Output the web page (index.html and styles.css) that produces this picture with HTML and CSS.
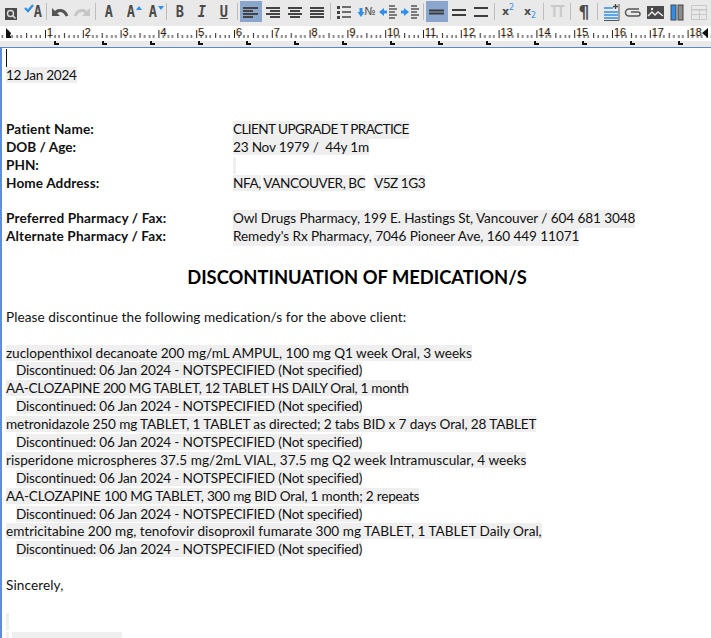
FILE: index.html
```html
<!DOCTYPE html>
<html lang="en">
<head>
<meta charset="utf-8">
<title>Discontinuation of medication</title>
<link rel="stylesheet" href="styles.css">
</head>
<body>
<div class="toolbar">
  <span class="btn"><svg width="22" height="22" viewBox="0 0 22 22"><rect x="5" y="7" width="12" height="12" fill="#4a4a4a"/><circle cx="10.500" cy="12.500" r="3" fill="none" stroke="#ddd" stroke-width="1.400"/><path d="M12.500 14.500l3 3" stroke="#ddd" stroke-width="1.600"/></svg></span>
  <span class="btn"><svg width="22" height="22" viewBox="0 0 22 22"><path d="M3 7l3 3 5-6" fill="none" stroke="#2f8fe8" stroke-width="2.200"/></svg><b class="glyph over">A</b></span>
  <i class="sep"></i>
  <span class="btn"><svg width="22" height="22" viewBox="0 0 22 22"><path d="M6 13c2-5 9-5 12 2" fill="none" stroke="#555" stroke-width="3"/><path d="M3 7v8h8z" fill="#555"/></svg></span>
  <span class="btn"><svg width="22" height="22" viewBox="0 0 22 22"><path d="M16 13c-2-5-9-5-12 2" fill="none" stroke="#c6c6c6" stroke-width="3"/><path d="M19 7v8h-8z" fill="#c6c6c6"/></svg></span>
  <i class="sep"></i>
  <span class="btn"><b class="glyph">A</b></span>
  <span class="btn"><b class="glyph">A</b><svg class="mark" width="6" height="4" viewBox="0 0 6 4"><path d="M0 4l3-4 3 4z" fill="#2f8fe8"/></svg></span>
  <span class="btn"><b class="glyph">A</b><svg class="mark" width="6" height="4" viewBox="0 0 6 4"><path d="M0 0l3 4 3-4z" fill="#2f8fe8"/></svg></span>
  <i class="sep"></i>
  <span class="btn"><b class="glyph">B</b></span>
  <span class="btn"><b class="glyph slant">I</b></span>
  <span class="btn"><b class="glyph under">U</b></span>
  <i class="sep"></i>
  <span class="btn on"><svg width="22" height="22" viewBox="0 0 22 22"><path d="M3 7h15M3 10h10M3 13h15M3 16h10" stroke="#444" stroke-width="2"/></svg></span>
  <span class="btn"><svg width="22" height="22" viewBox="0 0 22 22"><path d="M4 7h14M8 10h10M4 13h14M8 16h10" stroke="#444" stroke-width="2"/></svg></span>
  <span class="btn"><svg width="22" height="22" viewBox="0 0 22 22"><path d="M4 7h14M6 10h10M4 13h14M6 16h10" stroke="#444" stroke-width="2"/></svg></span>
  <span class="btn"><svg width="22" height="22" viewBox="0 0 22 22"><path d="M4 7h14M4 10h14M4 13h14M4 16h14" stroke="#444" stroke-width="2"/></svg></span>
  <i class="sep"></i>
  <span class="btn"><svg width="22" height="22" viewBox="0 0 22 22"><path d="M4 5h3v3H4zM4 10h3v3H4zM4 15h3v3H4z" fill="#444"/><path d="M9 6h9M9 11h9M9 16h9" stroke="#444" stroke-width="1.400"/></svg></span>
  <span class="btn"><svg width="22" height="22" viewBox="0 0 22 22"><path d="M6 7v6" stroke="#2f8fe8" stroke-width="3"/><path d="M2.500 11h7L6 16z" fill="#2f8fe8"/></svg><span class="no">№</span></span>
  <span class="btn"><svg width="22" height="22" viewBox="0 0 22 22"><path d="M2 11l5-4v8z" fill="#2f8fe8"/><path d="M6 11h4" stroke="#2f8fe8" stroke-width="3"/><path d="M12 5h6M12 8h8M12 11h6M12 14h8M12 17h6" stroke="#555" stroke-width="1.300"/></svg></span>
  <span class="btn"><svg width="22" height="22" viewBox="0 0 22 22"><path d="M10 11l-5-4v8z" fill="#2f8fe8"/><path d="M2 11h4" stroke="#2f8fe8" stroke-width="3"/><path d="M12 5h6M12 8h8M12 11h6M12 14h8M12 17h6" stroke="#555" stroke-width="1.300"/></svg></span>
  <i class="sep"></i>
  <span class="btn on"><svg width="22" height="22" viewBox="0 0 22 22"><path d="M3 9.500h15M3 12.500h15" stroke="#3c3c3c" stroke-width="2"/></svg></span>
  <span class="btn"><svg width="22" height="22" viewBox="0 0 22 22"><path d="M4 9h14M4 14h14" stroke="#3c3c3c" stroke-width="2"/></svg></span>
  <span class="btn"><svg width="22" height="22" viewBox="0 0 22 22"><path d="M4 7h14M4 15h14" stroke="#3c3c3c" stroke-width="2"/></svg></span>
  <i class="sep"></i>
  <span class="btn"><b class="script">x<sup>2</sup></b></span>
  <span class="btn"><b class="script">x<sub>2</sub></b></span>
  <i class="sep"></i>
  <span class="btn"><b class="glyph off">TT</b></span>
  <i class="sep"></i>
  <span class="btn"><b class="pilcrow">¶</b></span>
  <i class="sep"></i>
  <span class="btn"><svg width="22" height="22" viewBox="0 0 22 22"><path d="M4 7h9M4 11h14M4 14h14M4 17h14" stroke="#2f8fe8" stroke-width="1.300"/><path d="M4 19.500h15V3" fill="none" stroke="#555"/><path d="M13 5.500h5M15.500 3v5" stroke="#444" stroke-width="1.300"/></svg></span>
  <span class="btn"><svg width="22" height="22" viewBox="0 0 22 22"><path d="M17 8H7a3 3 0 0 0 0 7h9a2 2 0 0 0 0-4H9" fill="none" stroke="#555" stroke-width="1.500"/></svg></span>
  <span class="btn"><svg width="22" height="22" viewBox="0 0 22 22"><rect x="3" y="5" width="17" height="13" fill="#4a4a4a"/><path d="M4 15l4-4 3 3 3-3 5 4" fill="none" stroke="#eee" stroke-width="1.400"/><circle cx="8" cy="8" r="1.200" fill="#eee"/></svg></span>
  <span class="btn"><svg width="22" height="22" viewBox="0 0 22 22"><rect x="5" y="4" width="5" height="15" fill="#2f8fe8" stroke="#444"/><rect x="12" y="4" width="5" height="15" fill="#8c8c8c" stroke="#444"/></svg></span>
  <span class="btn"><svg width="22" height="22" viewBox="0 0 22 22"><path d="M3.500 4.500h15v14h-15z" fill="none" stroke="#c8c8c8"/><path d="M3 8h16v1.500H3zM11 8h1v11h-1zM3 13h16v1H3z" fill="#c8c8c8"/></svg></span>
</div>
<div class="ruler">
  <svg class="ticks" width="711" height="15"><defs><pattern id="t" x="7.200" y="0" width="37.800" height="15" patternUnits="userSpaceOnUse"><path d="M.5 4v8M19.500 7v5M5 9v3M10 9v3M14 9v3M24 9v3M29 9v3M33 9v3" stroke="#222"/></pattern></defs><rect width="711" height="15" fill="url(#t)"/><path d="M6 2v10h5v-2h-1l1-3z" fill="#111"/><path d="M708 2v10l-6-5z" fill="#111"/></svg>
  <div class="nums"><span>1</span><span>2</span><span>3</span><span>4</span><span>5</span><span>6</span><span>7</span><span>8</span><span>9</span><span>10</span><span>11</span><span>12</span><span>13</span><span>14</span><span>15</span><span>16</span><span>17</span><span>18</span></div>
</div>
<div class="tabs"><i></i><i></i><i></i><i></i><i></i><i></i><i></i><i></i><i></i><i></i><i></i><i></i><i></i><i></i></div>
<main class="doc">
  <p class="caretline"><i class="caret"></i></p>
  <p><span class="hl digits">12 Jan 2024</span></p>
  <p>&nbsp;</p>
  <p>&nbsp;</p>
  <div class="row"><b class="wide1">Patient Name:</b><span class="hl caps">CLIENT UPGRADE T PRACTICE</span></div>
  <div class="row"><b>DOB / Age:</b><span><span class="hl digits2">23 Nov 1979 /&nbsp; 44y 1m</span></span></div>
  <div class="row"><b>PHN:</b><span class="hl stub"></span></div>
  <div class="row"><b class="wide3">Home Address:</b><span class="addr"><span class="hl">NFA,</span> <span class="hl">VANCOUVER, BC</span>&nbsp;&nbsp; <span class="hl">V5Z 1G3</span></span></div>
  <p class="gap">&nbsp;</p>
  <div class="row"><b class="wide3">Preferred Pharmacy / Fax:</b><span class="hl tight1">Owl Drugs Pharmacy, 199 E. Hastings St, Vancouver / 604 681 3048</span></div>
  <div class="row"><b class="wide3">Alternate Pharmacy / Fax:</b><span class="hl tight2">Remedy's Rx Pharmacy, 7046 Pioneer Ave, 160 449 11071</span></div>
  <p>&nbsp;</p>
  <h1>DISCONTINUATION OF MEDICATION/S</h1>
  <p>&nbsp;</p>
  <p class="wide4">Please discontinue the following medication/s for the above client:</p>
  <p>&nbsp;</p>
  <p><span class="hl tight3">zuclopenthixol decanoate 200 mg/mL AMPUL, 100 mg Q1 week Oral, 3 weeks</span></p>
  <p class="sub"><span class="hl">Discontinued: 06 Jan 2024 - NOTSPECIFIED (Not specified)</span></p>
  <p><span class="hl tight4">AA-CLOZAPINE 200 MG TABLET, 12 TABLET HS DAILY Oral, 1 month</span></p>
  <p class="sub"><span class="hl">Discontinued: 06 Jan 2024 - NOTSPECIFIED (Not specified)</span></p>
  <p><span class="hl tight5">metronidazole 250 mg TABLET, 1 TABLET as directed; 2 tabs BID x 7 days Oral, 28 TABLET</span></p>
  <p class="sub"><span class="hl">Discontinued: 06 Jan 2024 - NOTSPECIFIED (Not specified)</span></p>
  <p><span class="hl wide5">risperidone microspheres 37.5 mg/2mL VIAL, 37.5 mg Q2 week Intramuscular, 4 weeks</span></p>
  <p class="sub"><span class="hl">Discontinued: 06 Jan 2024 - NOTSPECIFIED (Not specified)</span></p>
  <p><span class="hl tight6">AA-CLOZAPINE 100 MG TABLET, 300 mg BID Oral, 1 month; 2 repeats</span></p>
  <p class="sub"><span class="hl">Discontinued: 06 Jan 2024 - NOTSPECIFIED (Not specified)</span></p>
  <p><span class="hl">emtricitabine 200 mg, tenofovir disoproxil fumarate 300 mg TABLET, 1 TABLET Daily Oral,</span></p>
  <p class="sub"><span class="hl">Discontinued: 06 Jan 2024 - NOTSPECIFIED (Not specified)</span></p>
  <p>&nbsp;</p>
  <p class="wide6">Sincerely,</p>
  <p>&nbsp;</p>
  <div class="blank"><span class="hl stub"></span></div>
  <div class="blank split"><span class="hl stub"></span><span class="hl sig"></span></div>
</main>
</body>
</html>
```
FILE: styles.css
```css
* { box-sizing: border-box; }
html, body { margin: 0; height: 100%; }
body {
  width: 711px;
  height: 638px;
  overflow: hidden;
  background: #fff;
  font-family: Lato, "Liberation Sans", sans-serif;
}
.toolbar {
  display: flex;
  height: 26px;
  padding-top: 1px;
  background: #e9e9e9;
}
.btn {
  position: relative;
  flex: 0 0 22px;
  width: 22px;
  height: 21px;
  display: flex;
  align-items: center;
  justify-content: center;
}
.btn svg { position: absolute; left: 0; top: 0; }
.btn svg.mark { left: 16px; top: 5px; }
.on { background: #8ba6cd; }
.sep {
  flex: 0 0 5px;
  position: relative;
}
.sep::after {
  content: "";
  position: absolute;
  left: 2px;
  top: 2px;
  width: 1px;
  height: 17px;
  background: #bdbdbd;
}
.glyph {
  font: bold 16px "DejaVu Sans Mono", monospace;
  color: #4a4a4a;
  line-height: 21px;
  transform: scaleX(.85);
}
.over { position: relative; left: 5px; }
.slant { font-style: italic; }
.under { text-decoration: underline; }
.off { color: #c8c8c8; letter-spacing: -2px; }
.no { position: relative; left: 4px; font: 11px "DejaVu Sans", sans-serif; color: #555; }
.script { font: bold 11px "DejaVu Sans", sans-serif; color: #4a4a4a; }
.script sup, .script sub { font-size: 8px; font-weight: normal; color: #2f8fe8; line-height: 0; }
.pilcrow { font: bold 17px "DejaVu Sans", sans-serif; color: #4a4a4a; }
.ruler {
  position: relative;
  height: 15px;
  background: #fff;
}
.ticks { position: absolute; left: 0; top: 0; }
.nums {
  display: flex;
  padding-left: 45px;
  position: relative;
}
.nums span {
  flex: 0 0 37.8px;
  padding-left: 2px;
  white-space: nowrap;
  font: 11px/12px "Liberation Sans", sans-serif;
  color: #222;
  text-shadow: -1px 0 0 rgba(240, 160, 60, .55);
}
.tabs {
  display: flex;
  height: 6px;
  padding-left: 54px;
  background: #e9e9e9;
}
.tabs i {
  flex: 0 0 48px;
  height: 6px;
  margin-top: -2px;
  background:
    linear-gradient(#111, #111) 0 0 / 2px 6px no-repeat,
    linear-gradient(#111, #111) 0 4px / 5px 2px no-repeat;
}
.doc {
  height: 591px;
  border-top: 1px solid #5c87c2;
  border-left: 2px solid #5c8fd8;
  padding: 1px 0 0 4px;
  font-size: 13.6px;
  line-height: 17.9px;
  color: #111;
}
.doc p { margin: 0; height: 17.9px; white-space: nowrap; }
.doc .gap { height: 17px; }
.caret {
  display: block;
  width: 1px;
  height: 18px;
  background: #111;
}
.hl { background: #efefef; }
.row {
  display: grid;
  grid-template-columns: 227px 1fr;
  height: 18px;
  white-space: nowrap;
}
.row .hl { justify-self: start; }
.row b { font-weight: 700; }
.stub {
  display: inline-block;
  width: 3px;
  height: 17px;
}
h1 {
  margin: 0;
  height: 27.400px;
  font-size: 18.350px;
  line-height: 29px;
  font-weight: 700;
  text-align: center;
  padding-right: 3px;
  color: #000;
}
.sub { padding-left: 10px; letter-spacing: -.18px; }
.blank { height: 17.9px; }
.split { display: flex; gap: 3px; margin-top: 1px; }
.sig { width: 110px; height: 17px; display: inline-block; }
.digits { letter-spacing: -.27px; }
.digits2 { letter-spacing: -.2px; }
.caps { letter-spacing: -.6px; }
.addr { letter-spacing: -.45px; }
.wide1 { letter-spacing: .15px; }
.wide3 { letter-spacing: .12px; }
.wide4 { letter-spacing: .075px; }
.wide5 { letter-spacing: .03px; }
.wide6 { letter-spacing: .1px; }
.tight1 { letter-spacing: -.1px; }
.tight2 { letter-spacing: -.08px; }
.tight3 { letter-spacing: -.03px; }
.tight4 { letter-spacing: -.3px; }
.tight5 { letter-spacing: -.13px; }
.tight6 { letter-spacing: -.22px; }
```
